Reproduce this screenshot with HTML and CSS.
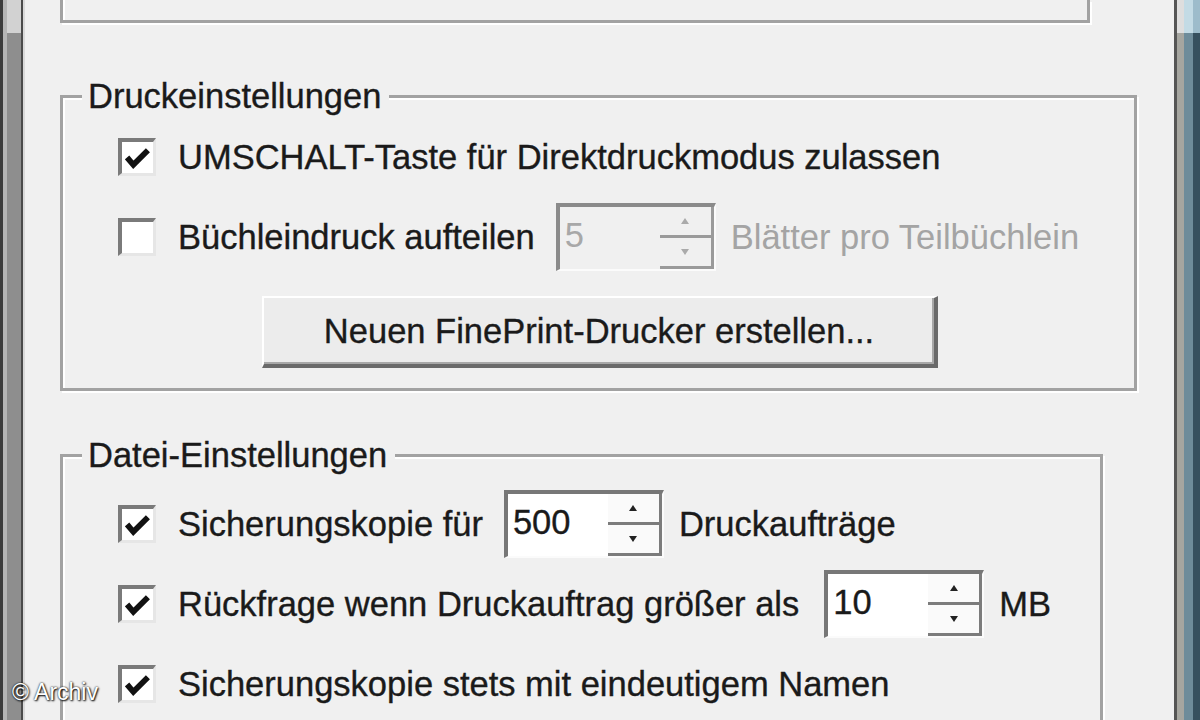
FILE: index.html
```html
<!DOCTYPE html>
<html lang="de">
<head>
<meta charset="utf-8">
<title>FinePrint Einstellungen</title>
<link rel="stylesheet" href="styles.css">
</head>
<body>
<div class="screen">
  <div class="sb-left"><div class="sb-left-track"></div></div>
  <main class="dialog">
    <div class="topbox"></div>

    <fieldset class="group g1">
      <legend>Druckeinstellungen</legend>
      <div class="row">
        <span class="cb"><svg class="tick" viewBox="0 0 24 20" width="25" height="21"><polyline points="2,9 8,16 22,2" fill="none" stroke="#111" stroke-width="5.5"/></svg></span>
        <span class="label">UMSCHALT-Taste für Direktdruckmodus zulassen</span>
      </div>
      <div class="row">
        <span class="cb"></span>
        <span class="label">Büchleindruck aufteilen</span>
        <div class="spin disabled">
          <span class="spin-val">5</span>
          <span class="spin-btns"><span class="up"></span><span class="down"></span></span>
        </div>
        <span class="label dim">Blätter pro Teilbüchlein</span>
      </div>
      <div class="btnrow"><button class="btn" type="button">Neuen FinePrint-Drucker erstellen...</button></div>
    </fieldset>

    <fieldset class="group g2">
      <legend>Datei-Einstellungen</legend>
      <div class="row">
        <span class="cb"><svg class="tick" viewBox="0 0 24 20" width="25" height="21"><polyline points="2,9 8,16 22,2" fill="none" stroke="#111" stroke-width="5.5"/></svg></span>
        <span class="label">Sicherungskopie für</span>
        <div class="spin">
          <span class="spin-val">500</span>
          <span class="spin-btns"><span class="up"></span><span class="down"></span></span>
        </div>
        <span class="label">Druckaufträge</span>
      </div>
      <div class="row">
        <span class="cb"><svg class="tick" viewBox="0 0 24 20" width="25" height="21"><polyline points="2,9 8,16 22,2" fill="none" stroke="#111" stroke-width="5.5"/></svg></span>
        <span class="label">Rückfrage wenn Druckauftrag größer als</span>
        <div class="spin spin-wide">
          <span class="spin-val">10</span>
          <span class="spin-btns"><span class="up"></span><span class="down"></span></span>
        </div>
        <span class="label">MB</span>
      </div>
      <div class="row">
        <span class="cb"><svg class="tick" viewBox="0 0 24 20" width="25" height="21"><polyline points="2,9 8,16 22,2" fill="none" stroke="#111" stroke-width="5.5"/></svg></span>
        <span class="label">Sicherungskopie stets mit eindeutigem Namen</span>
      </div>
    </fieldset>
  </main>
  <div class="sb-right">
    <div class="sr-a"></div><div class="sr-b"></div><div class="sr-c"></div><div class="sr-d"></div>
  </div>
  <div class="watermark">© Archiv</div>
</div>
</body>
</html>
```

FILE: styles.css
```css
html, body {
  margin: 0;
  padding: 0;
}
body {
  background: #f0f0f0;
  font-family: "Liberation Sans", Arial, sans-serif;
  font-size: 34.5px;
  color: #1a1a1a;
  overflow: hidden;
}
.screen {
  position: relative;
  display: flex;
  width: 1200px;
  height: 720px;
  overflow: hidden;
}

/* left scrollbar strip */
.sb-left {
  width: 25px;
  flex: none;
  box-sizing: border-box;
  display: flex;
  border-left: 3px solid #3c3c3c;
  border-right: 2px solid #d9d9d9;
  padding-left: 4px;
  background: #b5b5b5;
}
.sb-left-track {
  width: 14px;
  border-right: 2px solid #4a4a4a;
  background: linear-gradient(#d2d2d2 0 33px, #8e8e8e 33px);
}

/* right scrollbar / window edge */
.sb-right {
  width: 26px;
  flex: none;
  display: flex;
}
.sr-a { width: 3px; background: #555; }
.sr-b { width: 7px; background: linear-gradient(#dedede 0 33px, #a6a6a0 33px); }
.sr-c { width: 9px; background: linear-gradient(#c3dbe5 0 33px, #6e8c9a 33px); }
.sr-d { width: 7px; background: linear-gradient(#9dbccb 0 33px, #36505e 33px); }

.dialog {
  flex: 1;
  padding-left: 35px;
  display: flex;
  flex-direction: column;
  align-items: flex-start;
}

.topbox {
  flex: none;
  width: 1030px;
  height: 23px;
  box-sizing: border-box;
  border: 3px solid #a2a2a2;
  border-top: none;
  box-shadow: 2px 2px 0 #fff, inset 2px 0 0 #fff;
}

.group {
  flex: none;
  box-sizing: border-box;
  margin: 0;
  min-width: 0;
  border: 3px solid #a2a2a2;
  box-shadow: 2px 2px 0 #fff, inset 2px 2px 0 #fff;
  padding: 1px 0 20px 55px;
}
.group legend {
  font-size: 34.5px;
  line-height: 40px;
  height: 40px;
  padding: 0 8px 0 6px;
  margin-left: -36px;
  background: #f0f0f0;
  color: #1a1a1a;
  -webkit-text-stroke: 0.35px #1a1a1a;
}
.g1 {
  width: 1077px;
  margin-top: 53px;
}
.g2 {
  width: 1043px;
  margin-top: 44px;
  padding-top: 9px;
  padding-bottom: 60px;
}

.row {
  display: flex;
  align-items: center;
  height: 80px;
  white-space: nowrap;
}

.label {
  -webkit-text-stroke: 0.35px #1a1a1a;
}
.label.dim {
  color: #a4a4a4;
  -webkit-text-stroke: 0;
}

.cb {
  flex: none;
  width: 38px;
  height: 38px;
  box-sizing: border-box;
  border-style: solid;
  border-width: 4px 3px 3px 4px;
  border-color: #7a7a7a #e6e6e6 #e6e6e6 #7a7a7a;
  background: #fff;
  margin-right: 22px;
  display: flex;
  align-items: center;
  justify-content: center;
}
.tick {
  display: block;
  margin-top: 2px;
}

.spin {
  flex: none;
  display: flex;
  width: 160px;
  height: 68px;
  box-sizing: border-box;
  border-style: solid;
  border-width: 4px 2px 2px 4px;
  border-color: #777 #fbfbfb #fbfbfb #777;
  background: #fff;
  margin: 0 15px 0 21px;
}
.spin-wide {
  margin-left: 25px;
}
.spin-val {
  flex: 1;
  padding-left: 5px;
  display: flex;
  align-items: center;
  padding-bottom: 6px;
  -webkit-text-stroke: 0.35px #1a1a1a;
}
.spin-btns {
  width: 54px;
  display: flex;
  flex-direction: column;
}
.spin-btns span {
  flex: 1;
  display: flex;
  align-items: center;
  justify-content: center;
  background: #fafafa;
  border-right: 3px solid #7c7c7c;
  border-bottom: 3px solid #7c7c7c;
}
.spin-btns .up::before {
  content: "";
  border-left: 4px solid transparent;
  border-right: 4px solid transparent;
  border-bottom: 6px solid #222;
}
.spin-btns .down::before {
  content: "";
  border-left: 4px solid transparent;
  border-right: 4px solid transparent;
  border-top: 6px solid #222;
}
.spin.disabled {
  background: #f0f0f0;
  border-color: #8a8a8a #fbfbfb #fbfbfb #8a8a8a;
}
.spin.disabled .spin-val {
  color: #a8a8a8;
  -webkit-text-stroke: 0;
}
.spin.disabled .spin-btns span {
  background: #f0f0f0;
  border-color: #9a9a9a;
}
.spin.disabled .spin-btns .up::before { border-bottom-color: #aaa; }
.spin.disabled .spin-btns .down::before { border-top-color: #aaa; }

.btnrow {
  margin: 19px 0 0 144px;
}
.btn {
  display: block;
  width: 676px;
  height: 72px;
  box-sizing: border-box;
  padding: 0;
  font-family: inherit;
  font-size: 34.5px;
  color: #1a1a1a;
  -webkit-text-stroke: 0.35px #1a1a1a;
  background: #ececec;
  border-style: solid;
  border-width: 2px 4px 4px 2px;
  border-color: #fff #6a6a6a #6a6a6a #fff;
  box-shadow: inset -2px -2px 0 #a8a8a8;
}

.watermark {
  position: absolute;
  left: 12px;
  top: 681px;
  font-size: 23px;
  line-height: 1;
  color: #fff;
  text-shadow: 1px 1px 2px #000, 0 0 2px #000;
}
```
